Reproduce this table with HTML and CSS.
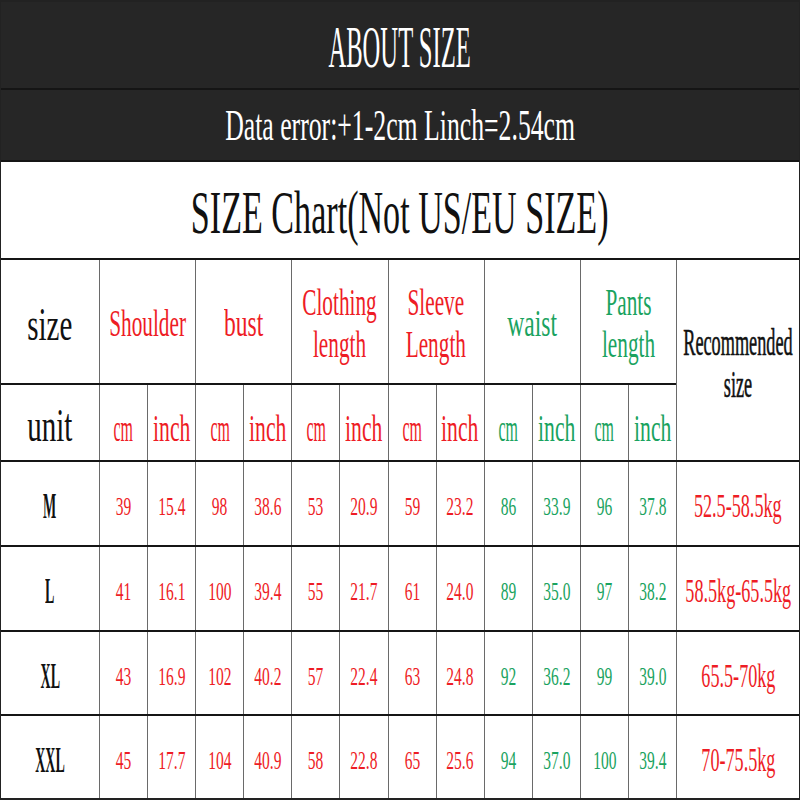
FILE: index.html
```html
<!DOCTYPE html>
<html>
<head>
<meta charset="utf-8">
<link rel="stylesheet" href="styles.css">
</head>
<body>
<div class="sheet">
  <div class="band band-dark"><span class="t t-about">ABOUT SIZE</span></div>
  <div class="band band-dark"><span class="t t-data">Data error:+1-2cm Linch=2.54cm</span></div>
  <div class="band band-light"><span class="t t-chart">SIZE Chart(Not US/EU SIZE)</span></div>

  <div class="c first"><span class="t t-head">size</span></div>
  <div class="c span2"><span class="t t-lbl red">Shoulder</span></div>
  <div class="c span2"><span class="t t-lbl t-short red">bust</span></div>
  <div class="c span2"><span class="t t-lbl red">Clothing<br>length</span></div>
  <div class="c span2"><span class="t t-lbl red">Sleeve<br>Length</span></div>
  <div class="c span2"><span class="t t-lbl t-short green">waist</span></div>
  <div class="c span2"><span class="t t-lbl green">Pants<br>length</span></div>
  <div class="c rec"><span class="t t-rec">Recommended<br>size</span></div>

  <div class="c first"><span class="t t-head">unit</span></div>
  <div class="c"><span class="t t-cm red">cm</span></div>
  <div class="c"><span class="t t-inch red">inch</span></div>
  <div class="c"><span class="t t-cm red">cm</span></div>
  <div class="c"><span class="t t-inch red">inch</span></div>
  <div class="c"><span class="t t-cm red">cm</span></div>
  <div class="c"><span class="t t-inch red">inch</span></div>
  <div class="c"><span class="t t-cm red">cm</span></div>
  <div class="c"><span class="t t-inch red">inch</span></div>
  <div class="c"><span class="t t-cm green">cm</span></div>
  <div class="c"><span class="t t-inch green">inch</span></div>
  <div class="c"><span class="t t-cm green">cm</span></div>
  <div class="c"><span class="t t-inch green">inch</span></div>

  <div class="c first"><span class="t t-size">M</span></div>
  <div class="c"><span class="t t-num red">39</span></div>
  <div class="c"><span class="t t-num red">15.4</span></div>
  <div class="c"><span class="t t-num red">98</span></div>
  <div class="c"><span class="t t-num red">38.6</span></div>
  <div class="c"><span class="t t-num red">53</span></div>
  <div class="c"><span class="t t-num red">20.9</span></div>
  <div class="c"><span class="t t-num red">59</span></div>
  <div class="c"><span class="t t-num red">23.2</span></div>
  <div class="c"><span class="t t-num green">86</span></div>
  <div class="c"><span class="t t-num green">33.9</span></div>
  <div class="c"><span class="t t-num green">96</span></div>
  <div class="c"><span class="t t-num green">37.8</span></div>
  <div class="c"><span class="t t-kg red">52.5-58.5kg</span></div>

  <div class="c first"><span class="t t-size">L</span></div>
  <div class="c"><span class="t t-num red">41</span></div>
  <div class="c"><span class="t t-num red">16.1</span></div>
  <div class="c"><span class="t t-num red">100</span></div>
  <div class="c"><span class="t t-num red">39.4</span></div>
  <div class="c"><span class="t t-num red">55</span></div>
  <div class="c"><span class="t t-num red">21.7</span></div>
  <div class="c"><span class="t t-num red">61</span></div>
  <div class="c"><span class="t t-num red">24.0</span></div>
  <div class="c"><span class="t t-num green">89</span></div>
  <div class="c"><span class="t t-num green">35.0</span></div>
  <div class="c"><span class="t t-num green">97</span></div>
  <div class="c"><span class="t t-num green">38.2</span></div>
  <div class="c"><span class="t t-kg red">58.5kg-65.5kg</span></div>

  <div class="c first"><span class="t t-size">XL</span></div>
  <div class="c"><span class="t t-num red">43</span></div>
  <div class="c"><span class="t t-num red">16.9</span></div>
  <div class="c"><span class="t t-num red">102</span></div>
  <div class="c"><span class="t t-num red">40.2</span></div>
  <div class="c"><span class="t t-num red">57</span></div>
  <div class="c"><span class="t t-num red">22.4</span></div>
  <div class="c"><span class="t t-num red">63</span></div>
  <div class="c"><span class="t t-num red">24.8</span></div>
  <div class="c"><span class="t t-num green">92</span></div>
  <div class="c"><span class="t t-num green">36.2</span></div>
  <div class="c"><span class="t t-num green">99</span></div>
  <div class="c"><span class="t t-num green">39.0</span></div>
  <div class="c"><span class="t t-kg red">65.5-70kg</span></div>

  <div class="c first"><span class="t t-size">XXL</span></div>
  <div class="c"><span class="t t-num red">45</span></div>
  <div class="c"><span class="t t-num red">17.7</span></div>
  <div class="c"><span class="t t-num red">104</span></div>
  <div class="c"><span class="t t-num red">40.9</span></div>
  <div class="c"><span class="t t-num red">58</span></div>
  <div class="c"><span class="t t-num red">22.8</span></div>
  <div class="c"><span class="t t-num red">65</span></div>
  <div class="c"><span class="t t-num red">25.6</span></div>
  <div class="c"><span class="t t-num green">94</span></div>
  <div class="c"><span class="t t-num green">37.0</span></div>
  <div class="c"><span class="t t-num green">100</span></div>
  <div class="c"><span class="t t-num green">39.4</span></div>
  <div class="c"><span class="t t-kg red">70-75.5kg</span></div>
</div>
</body>
</html>
```

FILE: styles.css
```css
html, body {
  margin: 0;
  padding: 0;
  overflow: hidden;
  background: #fff;
}

.sheet {
  box-sizing: border-box;
  width: 800px;
  height: 800px;
  border: 1px solid #222;
  border-top-width: 2px;
  border-bottom-width: 2px;
  background: #151515;
  display: grid;
  grid-template-columns: 98px repeat(12, 48.1px) minmax(0, 1fr);
  grid-template-rows: 86px 70px 96px 123px 75px 83px 83px 82px 82px;
  row-gap: 2px;
  column-gap: 0;
  font-family: "Liberation Serif", serif;
  color: #111;
  overflow: hidden;
}

.band {
  grid-column: 1 / -1;
  min-width: 0;
  display: flex;
  align-items: center;
  justify-content: center;
}

.band-dark {
  background: #262626;
  color: #fff;
}

.band-light {
  background: #fff;
  color: #111;
}

.c {
  box-sizing: border-box;
  min-width: 0;
  background: #fff;
  border-left: 1px solid #6a6a6a;
  display: flex;
  align-items: center;
  justify-content: center;
  text-align: center;
}

.c.first {
  border-left: none;
}

.span2 {
  grid-column: span 2;
}

.rec {
  grid-row: span 2;
}

.t {
  display: inline-block;
  flex: none;
  white-space: nowrap;
  line-height: 1;
  transform-origin: center center;
}

.red { color: #ee1c25; }
.green { color: #1aa360; }

.t-about {
  font-size: 60px;
  transform: scaleX(0.41);
  padding-top: 4px;
}

.t-data {
  font-size: 44px;
  transform: scaleX(0.585);
  padding-top: 2px;
}

.t-chart {
  font-size: 62px;
  transform: scaleX(0.55);
  padding-top: 4px;
}

.t-head {
  font-size: 46px;
  transform: scaleX(0.63);
  padding-top: 6px;
}

.t-lbl {
  font-size: 38px;
  line-height: 1.1;
  transform: scaleX(0.56);
  padding-top: 4px;
}

.t-lbl.t-short {
  transform: scaleX(0.62);
}

.t-cm {
  font-size: 38px;
  transform: scaleX(0.42);
  padding-top: 10px;
}

.t-inch {
  font-size: 38px;
  transform: scaleX(0.57);
  padding-top: 10px;
}

.t-rec {
  font-size: 38px;
  line-height: 1.1;
  -webkit-text-stroke: 0.6px #111;
  transform: scaleX(0.48);
  padding-top: 8px;
}

.t-size {
  font-size: 35px;
  font-weight: bold;
  transform: scaleX(0.4);
  padding-top: 6px;
}

.t-num {
  font-size: 25px;
  transform: scaleX(0.62);
  padding-top: 6px;
}

.t-kg {
  font-size: 33px;
  transform: scaleX(0.55);
  padding-top: 6px;
}
```
